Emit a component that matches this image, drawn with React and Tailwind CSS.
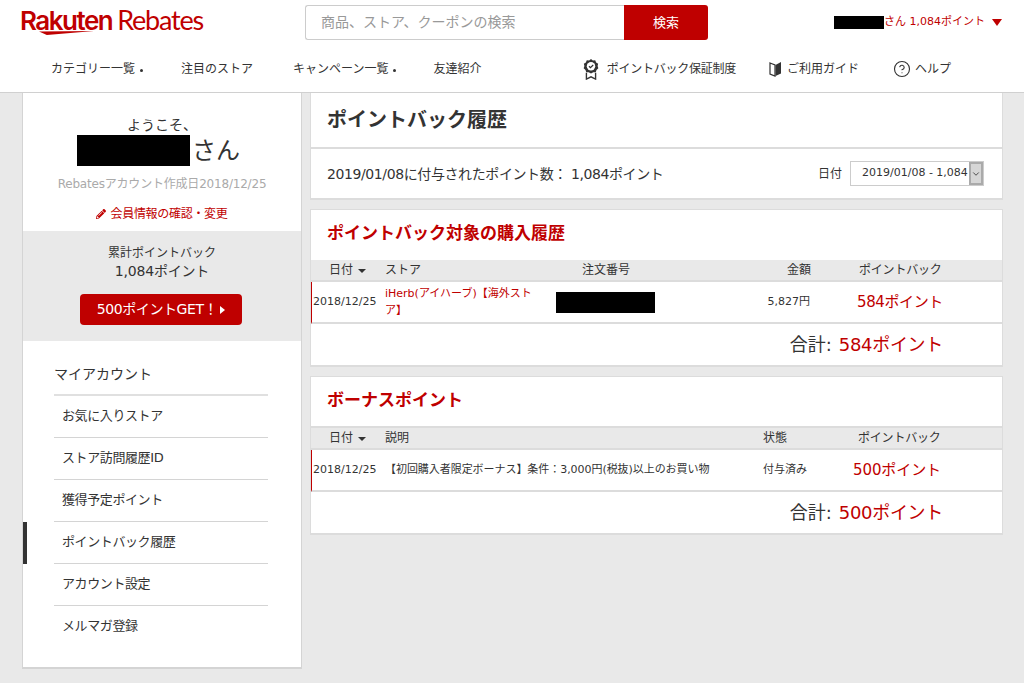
import React from 'react';
import { ChevronDown, CircleHelp } from 'lucide-react';
import { FaPencilAlt } from 'react-icons/fa';

const Caret = () => (
  <span className="inline-block ml-[5px] align-middle w-0 h-0 border-l-[4px] border-r-[4px] border-t-[4px] border-l-transparent border-r-transparent border-t-[#333]" />
);

const Dot = () => <span className="inline-block ml-[5px] mb-[1px] w-[3px] h-[3px] rounded-full bg-[#333]" />;

const Redacted = ({ className }) => <span className={`block bg-black ${className}`} />;

const Logo = () => (
  <div className="relative w-[184px] h-[36px] text-[#bf0000] leading-none">
    <div className="flex items-baseline pt-[1px] whitespace-nowrap font-['Inter',sans-serif]">
      <span className="text-[26px] font-semibold tracking-[-1.5px]">Rakuten</span>
      <span className="text-[27px] font-normal ml-[5px] tracking-[-1.2px] font-['Lato',sans-serif]">Rebates</span>
    </div>
    <svg className="absolute left-[19px] top-[26px]" width="55" height="4" viewBox="0 0 56 7" preserveAspectRatio="none">
      <path d="M0 1 L56 0 L8 7 Z" fill="#bf0000" />
    </svg>
  </div>
);

const Header = () => (
  <header className="bg-white border-b border-[#d0d0d0] h-[93px] shrink-0">
    <div className="flex items-start h-[50px]">
      <div className="ml-[20px] mt-[5px]"><Logo /></div>
      <div className="ml-[101px] mt-[5px] flex w-[403px] h-[35px]">
        <div className="flex-1 border border-[#ccc] border-r-0 rounded-l-[3px] pl-[15px] flex items-center text-[14px] text-[#999]">
          商品、ストア、クーポンの検索
        </div>
        <div className="w-[84px] bg-[#bf0000] rounded-r-[3px] text-white text-[13px] flex items-center justify-center">検索</div>
      </div>
      <div className="ml-auto mr-[22px] mt-[14px] flex items-center text-[11px] text-[#bf0000]">
        <Redacted className="w-[50px] h-[13px]" />
        <span>さん 1,084ポイント</span>
        <span className="ml-[7px] w-0 h-0 border-l-[5px] border-r-[5px] border-t-[7px] border-l-transparent border-r-transparent border-t-[#bf0000]" />
      </div>
    </div>
    <nav className="flex items-center h-[38px] text-[12px] text-[#333]">
      <span className="ml-[51px]">カテゴリー一覧<Dot /></span>
      <span className="ml-[38px]">注目のストア</span>
      <span className="ml-[40px]">キャンペーン一覧<Dot /></span>
      <span className="ml-[37px]">友達紹介</span>
      <div className="ml-auto mr-[73px] flex items-center">
        <svg width="18" height="22" viewBox="0 0 18 24" className="mr-[7px]">
          <path d="M4 16 L4 23 L9 20.5 L14 23 L14 16" fill="none" stroke="#333" strokeWidth="1.5" />
          <path d="M9 1 L11 2.6 L13.6 2.4 L14.6 4.8 L16.8 6.2 L16.2 8.8 L17 11.2 L15 13 L14.2 15.5 L11.6 15.6 L9 17 L6.4 15.6 L3.8 15.5 L3 13 L1 11.2 L1.8 8.8 L1.2 6.2 L3.4 4.8 L4.4 2.4 L7 2.6 Z" fill="#333" />
          <circle cx="9" cy="9" r="4.6" fill="#fff" />
          <path d="M6.8 9 L8.4 10.6 L11.4 7.6" fill="none" stroke="#333" strokeWidth="1.3" />
        </svg>
        <span className="tracking-[-0.25px]">ポイントバック保証制度</span>
        <svg width="13" height="16" viewBox="0 0 13 16" className="ml-[33px] mr-[5px]">
          <path d="M1 2 L6 4 L6 15 L1 13 Z" fill="none" stroke="#333" strokeWidth="1.2" />
          <path d="M6.5 4 L12 1 L12 12.5 L6.5 15 Z" fill="#333" />
        </svg>
        <span>ご利用ガイド</span>
        <CircleHelp className="ml-[34px] mr-[4px] mb-[1px] w-[18px] h-[18px] text-[#333]" strokeWidth={1.5} />
        <span>ヘルプ</span>
      </div>
    </nav>
  </header>
);

const menu = ['お気に入りストア', 'ストア訪問履歴ID', '獲得予定ポイント', 'ポイントバック履歴', 'アカウント設定', 'メルマガ登録'];

const Sidebar = () => (
  <aside className="w-[280px] h-[576px] shrink-0 bg-white border border-t-0 border-[#d4d4d4] border-b-2 text-[#333]">
    <div className="text-center pt-[22px] h-[138px]">
      <div className="text-[14px] leading-[20px]">ようこそ、</div>
      <div className="flex justify-center items-center h-[31px] mr-[7px]">
        <Redacted className="w-[113px] h-[31px]" />
        <span className="ml-[2px] text-[24px]">さん</span>
      </div>
      <div className="mt-[10px] text-[12px] leading-[16px] text-[#aaa] whitespace-nowrap tracking-[-0.2px]">Rebatesアカウント作成日2018/12/25</div>
      <div className="mt-[14px] flex justify-center items-center text-[12px] leading-[16px] text-[#bf0000] tracking-[-0.3px]">
        <FaPencilAlt className="w-[10px] h-[10px] mr-[4px]" />
        会員情報の確認・変更
      </div>
    </div>
    <div className="bg-[#e9e9e9] h-[110px] pt-[13px] text-center">
      <div className="text-[12px] leading-[18px]">累計ポイントバック</div>
      <div className="text-[14px] leading-[18px] tracking-[-0.2px]">1,084ポイント</div>
      <div className="ml-[57px] mt-[14px] w-[162px] h-[31px] bg-[#bf0000] rounded-[4px] text-white text-[14px] tracking-[-0.4px] flex items-center justify-center">
        500ポイントGET！
        <span className="ml-[3px] w-0 h-0 border-t-[4px] border-b-[4px] border-l-[5px] border-t-transparent border-b-transparent border-l-white" />
      </div>
    </div>
    <div className="pl-[31px] pr-[33px] pt-[23px]">
      <div className="text-[14px] leading-[20px] pb-[10px] border-b-2 border-[#e0e0e0]">マイアカウント</div>
      {menu.map((item, i) => (
        <div key={item} className={`relative h-[42px] flex items-center pl-[8px] pb-[2px] text-[13px] tracking-[-0.4px] ${i < menu.length - 1 ? 'border-b border-[#d4d4d4]' : ''}`}>
          {item === 'ポイントバック履歴' && <span className="absolute left-[-31px] top-0 h-[42px] w-[4px] bg-[#333]" />}
          {item}
        </div>
      ))}
    </div>
  </aside>
);

const TableHead = ({ cells }) => (
  <div className="flex items-center h-[22px] bg-[#e9e9e9] border-b-2 border-[#dcdcdc] text-[12px] text-[#333]">{cells}</div>
);

const Row = ({ children }) => (
  <div className="flex items-center h-[42px] pt-[1px] border-b-2 border-[#dcdcdc] border-l border-l-[#bf0000] text-[11px] text-[#333]">{children}</div>
);

const Total = ({ value }) => (
  <div className="flex items-center justify-end h-[42px] pb-[2px] pr-[59px] text-[18px] text-[#333]">
    合計:<span className="ml-[7px] text-[#bf0000] tracking-[-0.3px]">{value}</span>
  </div>
);

const PointsHead = () => <span className="ml-[2px] tracking-[-0.2px]">ポイントバック</span>;

export default function App() {
  return (
    <div className="w-[1024px] h-[683px] overflow-hidden flex flex-col bg-[#e9e9e9] font-['DejaVu_Sans','Noto_Sans_CJK_JP',sans-serif]">
      <Header />
      <div className="flex pl-[22px] gap-[8px]">
        <Sidebar />
        <main className="w-[693px] flex flex-col gap-[9px] text-[#333]">
          <section className="bg-white border border-t-0 border-b-2 border-[#dcdcdc] h-[107px]">
            <h1 className="h-[56px] flex items-center pl-[16px] text-[20px] font-bold border-b-2 border-[#dcdcdc]">ポイントバック履歴</h1>
            <div className="h-[49px] flex items-center pl-[16px] pr-[17px] text-[14px]">
              <span className="tracking-[-0.4px] pt-[2px]">2019/01/08に付与されたポイント数： 1,084ポイント</span>
              <span className="ml-auto text-[12px] pt-[1px]">日付</span>
              <div className="ml-[8px] mr-[1px] w-[134px] h-[25px] border border-[#ccc] flex items-center text-[11px] overflow-hidden">
                <span className="pl-[11px] flex-1 whitespace-nowrap overflow-hidden">2019/01/08 - 1,084</span>
                <span className="w-[14px] h-full bg-[#d6d6d6] border-2 border-[#aaa] flex items-center justify-center shrink-0">
                  <ChevronDown className="w-[10px] h-[10px]" />
                </span>
              </div>
            </div>
          </section>

          <section className="bg-white border border-[#dcdcdc] border-b-2 h-[158px]">
            <h2 className="h-[50px] flex items-center pl-[16px] pb-[2px] text-[17px] font-bold text-[#bf0000]">ポイントバック対象の購入履歴</h2>
            <TableHead cells={<>
              <span className="ml-[18px] w-[56px]">日付<Caret /></span>
              <span className="w-[197px]">ストア</span>
              <span className="w-[205px]">注文番号</span>
              <span className="w-[70px]">金額</span>
              <PointsHead />
            </>} />
            <Row>
              <span className="w-[73px] pl-px">2018/12/25</span>
              <span className="w-[171px] pr-[20px] -mt-[1px] text-[#bf0000] leading-[17px]">iHerb(アイハーブ)【海外ストア】</span>
              <Redacted className="w-[99px] h-[21px]" />
              <span className="w-[155px] text-right">5,827円</span>
              <span className="ml-[47px] text-[#bf0000] text-[15px] tracking-[-0.4px]">584ポイント</span>
            </Row>
            <Total value="584ポイント" />
          </section>

          <section className="bg-white border border-[#dcdcdc] border-b-2 h-[159px]">
            <h2 className="h-[51px] flex items-center pl-[16px] pb-[2px] text-[17px] font-bold text-[#bf0000] border-b-2 border-[#dcdcdc]">ボーナスポイント</h2>
            <TableHead cells={<>
              <span className="ml-[18px] w-[56px]">日付<Caret /></span>
              <span className="w-[378px]">説明</span>
              <span className="w-[93px]">状態</span>
              <PointsHead />
            </>} />
            <Row>
              <span className="w-[73px] pl-px">2018/12/25</span>
              <span className="w-[378px] whitespace-nowrap tracking-[-0.05px]">【初回購入者限定ボーナス】条件：3,000円(税抜)以上のお買い物</span>
              <span className="w-[90px]">付与済み</span>
              <span className="text-[#bf0000] text-[15px] tracking-[-0.1px]">500ポイント</span>
            </Row>
            <Total value="500ポイント" />
          </section>
        </main>
      </div>
    </div>
  );
}
